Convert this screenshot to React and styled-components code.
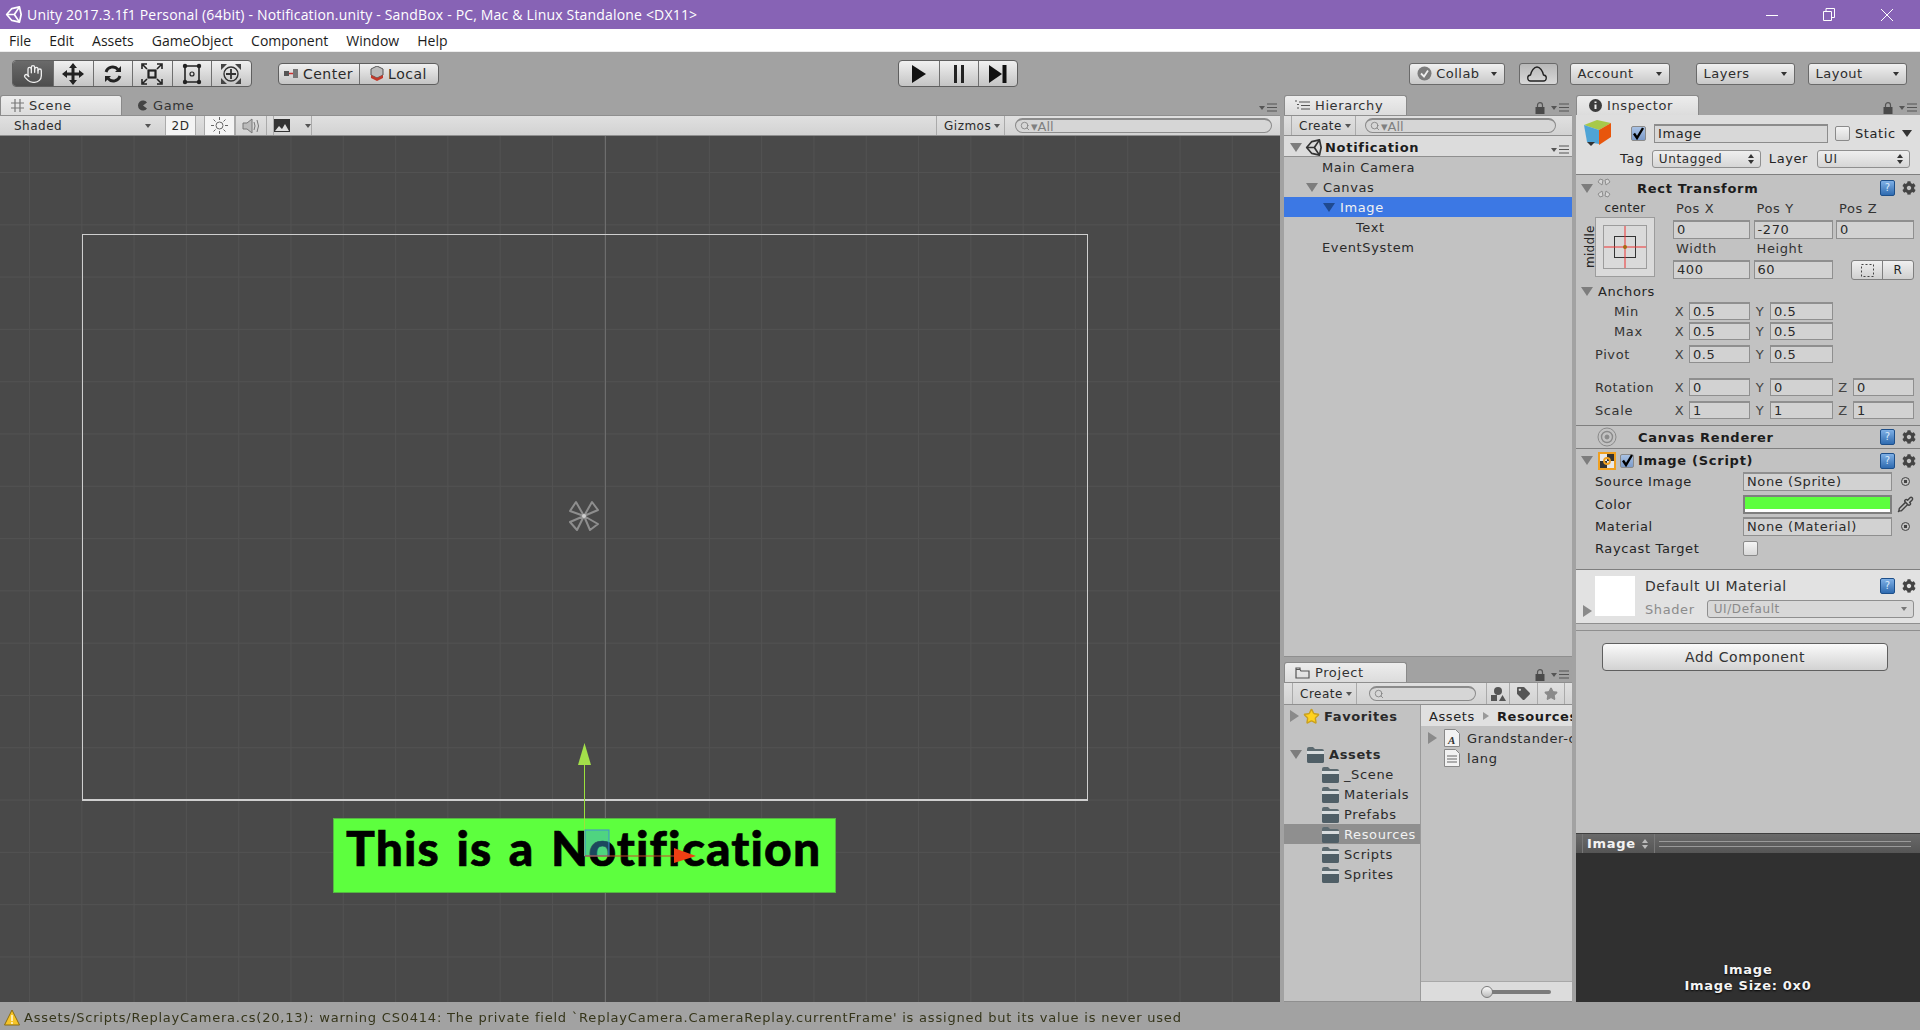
import React from 'react';
import styled, { createGlobalStyle } from 'styled-components';
import { Hand, Pipette, Star, Search } from 'lucide-react';
import { FaCog, FaTag } from 'react-icons/fa';

const GlobalStyle = createGlobalStyle`
  html, body { margin: 0; padding: 0; background: #a2a2a2; overflow: hidden; }
  * { box-sizing: border-box; }
  svg { flex: none; }
`;

const Window = styled.div`
  width: 1920px;
  height: 1030px;
  display: flex;
  flex-direction: column;
  font-family: 'DejaVu Sans', sans-serif;
  font-size: 13px;
  color: #242424;
  filter: blur(0.35px);
`;

const TitleBar = styled.div`
  height: 29px;
  background: #8763b5;
  color: #fff;
  display: flex;
  align-items: center;
  padding-left: 5px;
  font-family: 'Open Sans', sans-serif;
  font-size: 14px;
`;

const TitleText = styled.span`
  margin-left: 5px;
  letter-spacing: 0.18px;
`;

const WindowControls = styled.div`
  margin-left: auto;
  display: flex;
  align-items: center;
  padding-right: 26px;
  gap: 45px;
`;

const MenuBar = styled.div`
  height: 23px;
  background: #fff;
  border-bottom: 1px solid #ececec;
  display: flex;
  align-items: center;
  padding-left: 9px;
  gap: 18px;
  font-family: 'Open Sans', sans-serif;
  font-size: 14px;
  color: #1c1c1c;
`;

const MainToolbar = styled.div`
  height: 43px;
  background: #a2a2a2;
  display: flex;
  align-items: center;
  padding-left: 12px;
`;

const ButtonGroup = styled.div`
  display: flex;
  height: ${p => p.$h}px;
  margin-left: ${p => p.$ml || 0}px;
  border: 1px solid #5f5f5f;
  border-radius: 4px;
  overflow: hidden;
  background: linear-gradient(#f0f0f0, #c4c4c4);
`;

const ToolButton = styled.div`
  width: ${p => p.$w}px;
  display: flex;
  align-items: center;
  justify-content: center;
  gap: 4px;
  color: #2a2a2a;
  font-size: 14px;
  letter-spacing: 0.5px;
  border-left: ${p => (p.$first ? 'none' : '1px solid #6f6f6f')};
  background: ${p => (p.$active ? 'linear-gradient(#6a6a6a, #4d4d4d)' : 'transparent')};
`;

const PillButton = styled.div`
  width: ${p => p.$w}px;
  height: 22px;
  margin-left: ${p => p.$ml || 0}px;
  border: 1px solid #6a6a6a;
  border-radius: 3px;
  background: ${p => (p.$sunk ? 'linear-gradient(#b8b8b8, #d8d8d8)' : 'linear-gradient(#f0f0f0, #c8c8c8)')};
  display: flex;
  align-items: center;
  padding: 0 7px;
  font-size: 13px;
  letter-spacing: 0.5px;
  color: #2d2d2d;
`;

const Caret = styled.span`
  width: 0;
  height: 0;
  margin-left: auto;
  border-left: 3px solid transparent;
  border-right: 3px solid transparent;
  border-top: 4px solid ${p => p.$color || '#333'};
`;

const Workspace = styled.div`
  height: 907px;
  display: flex;
  background: #a2a2a2;
`;

const SceneColumn = styled.div`
  width: 1280px;
  display: flex;
  flex-direction: column;
`;

const MiddleColumn = styled.div`
  width: 288px;
  margin-left: 4px;
  display: flex;
  flex-direction: column;
`;

const InspectorColumn = styled.div`
  width: 344px;
  margin-left: 4px;
  display: flex;
  flex-direction: column;
`;

const TabStrip = styled.div`
  height: 20px;
  flex: none;
  display: flex;
  align-items: flex-end;
  margin-top: ${p => p.$mt || 0}px;
`;

const Tab = styled.div`
  width: ${p => p.$w}px;
  height: 20px;
  padding-left: ${p => p.$pl}px;
  display: flex;
  align-items: center;
  gap: 5px;
  border-radius: 3px 3px 0 0;
  letter-spacing: 0.6px;
  color: #333;
  background: ${p => (p.$active ? 'linear-gradient(#ededed, #dcdcdc)' : 'transparent')};
  border: ${p => (p.$active ? '1px solid #8a8a8a' : 'none')};
  border-bottom: none;
`;

const StripTools = styled.div`
  margin-left: auto;
  height: 20px;
  display: flex;
  align-items: center;
  gap: 6px;
  padding: 5px 3px 0 0;
`;

const Toolbar = styled.div`
  height: ${p => p.$h || 21}px;
  flex: none;
  display: flex;
  align-items: center;
  background: linear-gradient(#e0e0e0, #d2d2d2);
  border-top: 1px solid #8f8f8f;
  border-bottom: 1px solid #8f8f8f;
  font-size: 12px;
  letter-spacing: 0.5px;
  padding-left: ${p => p.$pl || 0}px;
`;

const ToolbarCell = styled.div`
  width: ${p => p.$w}px;
  height: 100%;
  margin-left: ${p => p.$ml || 0}px;
  display: flex;
  align-items: center;
  justify-content: ${p => (p.$center ? 'center' : 'flex-start')};
  padding: ${p => (p.$center ? '0' : '0 4px 0 7px')};
  background: ${p => (p.$on ? '#f4f4f4' : 'transparent')};
  border-left: ${p => (p.$edge ? '1px solid #aaa' : 'none')};
  border-right: ${p => (p.$edge ? '1px solid #aaa' : 'none')};
  color: #2a2a2a;
`;

const SearchField = styled.div`
  width: ${p => p.$w}px;
  height: 15px;
  margin-left: ${p => p.$ml}px;
  border: 1px solid #8b8b8b;
  border-top-width: 2px;
  border-radius: 8px;
  background: #d6d6d6;
  display: flex;
  align-items: center;
  padding-left: 4px;
  gap: 1px;
  color: #808080;
  font-size: 13px;
  letter-spacing: 0;
`;

const SceneView = styled.div`
  position: relative;
  flex: 1;
  overflow: hidden;
  background-color: #494949;
  background-image:
    linear-gradient(to right, #525252 1px, transparent 1px),
    linear-gradient(to bottom, #525252 1px, transparent 1px);
  background-size: 52.3px 52.3px;
  background-position: 29px 36px;
`;

const AxisLine = styled.div`
  position: absolute;
  left: 605px;
  top: 0;
  bottom: 0;
  width: 1px;
  background: #6d6d6d;
`;

const CanvasFrame = styled.div`
  position: absolute;
  left: 82px;
  top: 98px;
  width: 1006px;
  height: 567px;
  border: 2px solid #cfcfcf;
  border-width: 1px 1px 2px 1px;
`;

const NotificationImage = styled.div`
  position: absolute;
  left: 333px;
  top: 682px;
  width: 503px;
  height: 75px;
  background: #5dff3e;
  border: 1px solid #55b742;
  color: #000;
  font-family: Lato, sans-serif;
  font-weight: 900;
  font-size: 48px;
  line-height: 58px;
  padding-left: 12px;
  letter-spacing: 1.1px;
  word-spacing: 4px;
  white-space: nowrap;
  -webkit-text-stroke: 0.6px #000;
`;

const GizmoOverlay = styled.svg`
  position: absolute;
  left: 0;
  top: 0;
  width: 1280px;
  height: 866px;
`;

const StatusBar = styled.div`
  height: 28px;
  background: #a2a2a2;
  display: flex;
  align-items: center;
  padding: 2px 0 0 4px;
  gap: 4px;
  font-size: 13px;
  letter-spacing: 0.79px;
  color: #35351a;
  white-space: nowrap;
`;

const Panel = styled.div`
  flex: ${p => (p.$grow ? 1 : 'none')};
  height: ${p => (p.$h ? `${p.$h}px` : 'auto')};
  background: #c2c2c2;
  border-bottom: 1px solid #8f8f8f;
  display: flex;
  flex-direction: column;
  overflow: hidden;
`;

const SceneTitleRow = styled.div`
  height: 21px;
  padding: 2px 0 0 6px;
  flex: none;
  display: flex;
  align-items: center;
  background: #dcdcdc;
  border-bottom: 1px solid #8f8f8f;
  font-weight: 700;
  letter-spacing: 0.7px;
  color: #1c1c1c;
  gap: 3px;
`;

const TreeRow = styled.div`
  height: 20px;
  display: flex;
  align-items: center;
  padding-left: ${p => p.$indent}px;
  gap: ${p => p.$gap ?? 5}px;
  letter-spacing: 0.62px;
  white-space: nowrap;
  font-weight: ${p => (p.$bold ? 700 : 400)};
  color: ${p => (p.$selected || p.$muted ? '#f2f2f2' : '#2a2a2a')};
  background: ${p => (p.$selected ? '#3c78e4' : p.$muted ? '#8f8f8f' : 'transparent')};
  margin-top: ${p => p.$mt || 0}px;
`;

const Arrow = styled.span`
  width: 0;
  height: 0;
  flex: none;
  border-style: solid;
  border-color: transparent;
  ${p => (p.$right
    ? `border-width: 6px 0 6px 9px; border-left-color: ${p.$color || '#8a8a8a'};`
    : `border-width: 9px 6px 0 6px; border-top-color: ${p.$color || '#7d7d7d'};`)}
`;

const SmallRightArrow = styled(Arrow)`
  border-width: 4px 0 4px 6px;
`;

const SmallDownArrow = styled(Arrow)`
  margin-left: 6px;
  border-width: 7px 5px 0 5px;
`;

const ProjectBody = styled.div`
  flex: 1;
  display: flex;
  min-height: 0;
`;

const ProjectTree = styled.div`
  width: 137px;
  flex: none;
  border-right: 1px solid #9a9a9a;
  padding-top: 1px;
`;

const ProjectFiles = styled.div`
  flex: 1;
  min-width: 0;
  display: flex;
  flex-direction: column;
`;

const Breadcrumb = styled.div`
  height: 21px;
  flex: none;
  background: #e0e0e0;
  display: flex;
  align-items: center;
  padding: 1px 0 0 8px;
  gap: 8px;
  letter-spacing: 0.6px;
  white-space: nowrap;
  overflow: hidden;
`;

const BoldCrumb = styled.span`
  font-weight: 700;
  color: #1c1c1c;
`;

const FileList = styled.div`
  flex: 1;
  padding-top: 2px;
  overflow: hidden;
`;

const SliderBar = styled.div`
  height: 20px;
  flex: none;
  background: #dcdcdc;
  border-top: 1px solid #a8a8a8;
  position: relative;
`;

const SliderTrack = styled.div`
  position: absolute;
  left: 66px;
  top: 8px;
  width: 64px;
  height: 4px;
  border-radius: 2px;
  background: #7b7b7b;
`;

const SliderKnob = styled.div`
  position: absolute;
  left: 60px;
  top: 4px;
  width: 12px;
  height: 12px;
  border-radius: 50%;
  border: 1px solid #7b7b7b;
  background: linear-gradient(#fafafa, #bcbcbc);
`;

const ObjectHeader = styled.div`
  height: 60px;
  flex: none;
  background: #dedede;
  border-bottom: 1px solid #7f7f7f;
  padding: 9px 0 0 8px;
  display: flex;
  flex-direction: column;
  gap: 6px;
`;

const HeaderRow = styled.div`
  display: flex;
  align-items: center;
  height: 19px;
  padding-left: ${p => p.$pl || 0}px;
  letter-spacing: 0.6px;
`;

const HeaderLabel = styled.span`
  margin-left: ${p => p.$ml}px;
`;

const CheckBox = styled.div`
  width: ${p => p.$size || 15}px;
  height: ${p => p.$size || 15}px;
  flex: none;
  margin-left: ${p => p.$ml || 0}px;
  border: 1px solid #8a8a8a;
  border-radius: 2px;
  background: ${p => (p.$checked ? 'linear-gradient(#a9c2e4, #7c9bca)' : 'linear-gradient(#f4f4f4, #d8d8d8)')};
  display: flex;
  align-items: center;
  justify-content: center;
`;

const NameField = styled.div`
  width: 174px;
  height: 19px;
  margin-left: 8px;
  background: #d8d8d8;
  border: 1px solid #8c8c8c;
  border-top-width: 2px;
  padding-left: 3px;
  line-height: 15px;
  letter-spacing: 0.6px;
`;

const SelectBox = styled.div`
  width: ${p => p.$w}px;
  height: ${p => p.$h || 18}px;
  margin-left: ${p => p.$ml || 0}px;
  border: 1px solid #8f8f8f;
  border-radius: 3px;
  background: ${p => (p.$faint ? '#d8d8d8' : 'linear-gradient(#efefef, #d6d6d6)')};
  color: ${p => (p.$faint ? '#8a8a8a' : '#2d2d2d')};
  display: flex;
  align-items: center;
  justify-content: space-between;
  padding: 0 6px;
  font-size: 12px;
  letter-spacing: 0.6px;
`;

const ComponentHead = styled.div`
  height: ${p => p.$h}px;
  display: flex;
  align-items: center;
  padding-left: ${p => p.$pl ?? 5}px;
  font-weight: 700;
  letter-spacing: 0.72px;
  color: #1c1c1c;
  white-space: nowrap;
`;

const HeadTitle = styled.span`
  margin-left: ${p => p.$ml}px;
  display: inline-flex;
`;

const HeadTools = styled.div`
  margin-left: auto;
  display: flex;
  align-items: center;
  gap: 7px;
  padding-right: 4px;
`;

const HelpBook = styled.div`
  width: 15px;
  height: 16px;
  border-radius: 2px;
  border: 1px solid #1d4f8a;
  background: linear-gradient(#7fb0e6, #2f6bb0);
  color: #dbe9f8;
  font-size: 10px;
  font-weight: 400;
  line-height: 14px;
  text-align: center;
  letter-spacing: 0;
`;

const RectSection = styled.section`
  height: 251px;
  flex: none;
  border-bottom: 1px solid #7f7f7f;
`;

const RectBody = styled.div`
  display: flex;
  padding-left: 7px;
  margin-top: -1px;
`;

const MiddleLabel = styled.div`
  writing-mode: vertical-rl;
  transform: rotate(180deg);
  font-size: 12px;
  height: 60px;
  width: 12px;
  margin-top: 17px;
  text-align: center;
  letter-spacing: 0.3px;
`;

const PresetColumn = styled.div`
  width: 78px;
  flex: none;
`;

const PresetCaption = styled.div`
  width: 60px;
  height: 17px;
  text-align: center;
  font-size: 12px;
  letter-spacing: 0.4px;
  line-height: 17px;
`;

const PresetBox = styled.div`
  width: 60px;
  height: 60px;
  background: #dadada;
  border: 1px solid #9c9c9c;
  display: flex;
  align-items: center;
  justify-content: center;
`;

const FieldGrid = styled.div`
  width: 241px;
  display: grid;
  grid-template-columns: 77px 79px 78px;
  grid-auto-rows: 19px;
  column-gap: 3.5px;
  row-gap: 1px;
  letter-spacing: 0.6px;
`;

const FieldLabel = styled.div`
  padding: 1px 0 0 3px;
  line-height: 16px;
  color: #333;
`;

const ValueField = styled.div`
  background: #d2d2d2;
  border: 1px solid #8f8f8f;
  border-top-width: 2px;
  padding-left: 3px;
  line-height: 15px;
  font-size: 13px;
  letter-spacing: 0.6px;
  color: #2a2a2a;
  white-space: nowrap;
  overflow: hidden;
  ${p => p.$h && `height: ${p.$h}px;`}
`;

const BlueprintGroup = styled.div`
  display: flex;
  width: 63px;
  height: 20px;
  justify-self: end;
  border: 1px solid #7f7f7f;
  border-radius: 3px;
  background: linear-gradient(#f0f0f0, #cfcfcf);
  overflow: hidden;
`;

const BlueprintCell = styled.div`
  flex: 1;
  display: flex;
  align-items: center;
  justify-content: center;
  font-size: 12px;
  border-left: ${p => (p.$sep ? '1px solid #7f7f7f' : 'none')};
`;

const AnchorsHead = styled.div`
  height: 19px;
  margin-top: 3px;
  display: flex;
  align-items: center;
  padding-left: 5px;
  gap: 5px;
  letter-spacing: 0.6px;
`;

const AxisGrid = styled.div`
  height: 20px;
  margin-top: ${p => p.$mt || 0}px;
  display: grid;
  grid-template-columns: 94px 19px 61px 20px 63px 20px 61px;
  align-items: center;
  letter-spacing: 0.6px;
`;

const AxisLabel = styled.span`
  padding-left: ${p => p.$pl || 0}px;
  color: #333;
`;

const AxisLetter = styled.span`
  color: #444;
  text-align: center;
`;

const ImageScriptSection = styled.section`
  height: 121px;
  flex: none;
  border-top: 1px solid #7f7f7f;
`;

const PropertyRow = styled.div`
  height: 18.5px;
  margin-bottom: 4px;
  display: grid;
  grid-template-columns: 148px 149px 22px;
  padding-left: 19px;
  align-items: center;
  letter-spacing: 0.62px;
`;

const ColorSwatch = styled.div`
  height: 19px;
  border: 2px solid #7f7f7f;
  background: linear-gradient(#5dff3e 0 12px, #fff 12px);
`;

const PickerDot = styled.span`
  width: 9px;
  height: 9px;
  margin-left: 9px;
  border-radius: 50%;
  border: 1px solid #444;
  background: radial-gradient(#444 0 1.5px, transparent 2px);
`;

const PipetteSlot = styled.span`
  display: flex;
  margin-left: 5px;
`;

const MaterialSection = styled.section`
  height: 55px;
  flex: none;
  background: #e2e2e2;
  border-top: 1px solid #7f7f7f;
  border-bottom: 1px solid #8f8f8f;
  display: flex;
  position: relative;
  padding: 6px 0 0 19px;
`;

const MaterialThumb = styled.div`
  width: 40px;
  height: 40px;
  background: #fff;
`;

const MaterialInfo = styled.div`
  margin-left: 10px;
  flex: 1;
  display: flex;
  flex-direction: column;
`;

const MaterialName = styled.div`
  display: flex;
  height: 20px;
  align-items: center;
  font-size: 14px;
  letter-spacing: 0.55px;
  color: #333;
`;

const ShaderRow = styled.div`
  display: flex;
  align-items: center;
  margin-top: 4px;
  color: #8c8c8c;
  letter-spacing: 0.6px;
`;

const MaterialArrow = styled.div`
  position: absolute;
  left: 7px;
  top: 35px;
  display: flex;
`;

const AddRow = styled.div`
  margin-top: 6px;
  border-top: 1px solid #8f8f8f;
  padding: 12px 0 0 26px;
`;

const AddButton = styled.div`
  width: 286px;
  height: 28px;
  border: 1px solid #5f5f5f;
  border-radius: 4px;
  background: linear-gradient(#fafafa, #d2d2d2);
  text-align: center;
  line-height: 26px;
  font-size: 14px;
  letter-spacing: 0.55px;
  color: #333;
`;

const InspectorFill = styled.div`
  flex: 1;
  background: #c2c2c2;
  display: flex;
  flex-direction: column;
  overflow: hidden;
`;

const PreviewHead = styled.div`
  height: 20px;
  flex: none;
  background: linear-gradient(#6a6a6a, #555);
  border-top: 1px solid #3f3f3f;
  display: flex;
  align-items: center;
  padding-left: 6px;
  color: #f2f2f2;
  font-weight: 700;
  letter-spacing: 0.7px;
`;

const PreviewName = styled.div`
  width: 73px;
  height: 100%;
  display: flex;
  align-items: center;
  justify-content: space-between;
  padding: 0 6px 0 4px;
  border-left: 1px solid #777;
  border-right: 1px solid #777;
`;

const PreviewStripes = styled.div`
  flex: 1;
  height: 6px;
  margin: 0 9px 0 4px;
  border-top: 1px solid #9a9a9a;
  border-bottom: 1px solid #9a9a9a;
`;

const PreviewBody = styled.div`
  height: 149px;
  flex: none;
  background: #303030;
  display: flex;
  flex-direction: column;
  justify-content: flex-end;
  align-items: center;
  padding-bottom: 8px;
  color: #f4f4f4;
  font-weight: 700;
  font-size: 13px;
  line-height: 16px;
  letter-spacing: 0.72px;
  text-shadow: 0 1px 2px #000;
`;

const Lock = () => (
  <svg width="10" height="12" viewBox="0 0 10 12">
    <path d="M2.500 5V3.200a2.500 2.500 0 0 1 5 0V5" fill="none" stroke="#555" strokeWidth="1.200" />
    <rect x="0.500" y="5" width="9" height="7" fill="#4a4a4a" />
  </svg>
);

const PaneMenu = () => (
  <svg width="18" height="9" viewBox="0 0 18 9">
    <path d="M0 3h6L3 7z" fill="#555" />
    <path d="M8 1h10M8 4.500h10M8 8h10" stroke="#555" strokeWidth="1.200" />
  </svg>
);

const UnityLogo = ({ size, color }) => (
  <svg width={size} height={size} viewBox="0 0 20 20" fill="none" stroke={color} strokeWidth="2" strokeLinejoin="round">
    <path d="M2 10 L8 3 L17 1 L19 10 L17 19 L8 17 Z" />
    <path d="M2 10 H11 L17 1 M11 10 L17 19" />
  </svg>
);

const UpDown = ({ color = '#333' }) => (
  <svg width="6" height="10" viewBox="0 0 6 10" fill={color}>
    <path d="M3 0l3 4H0zM3 10L0 6h6z" />
  </svg>
);

const Check = () => (
  <svg width="13" height="13" viewBox="0 0 13 13" fill="none" stroke="#000" strokeWidth="2.400">
    <path d="M2 6.500l3 4.500L11 1" />
  </svg>
);

const MoveIcon = () => (
  <svg width="22" height="22" viewBox="0 0 22 22" fill="#222">
    <path d="M11 0l4 5h-2.500v4.500H17V7l5 4-5 4v-2.500h-4.500V17H15l-4 5-4-5h2.500v-4.500H5V15l-5-4 5-4v2.500h4.500V5H7z" />
  </svg>
);

const RotateIcon = () => (
  <svg width="20" height="20" viewBox="0 0 20 20" fill="none" stroke="#222" strokeWidth="2.800">
    <path d="M3 8a7 7 0 0 1 12-2.500M17 12a7 7 0 0 1-12 2.500" />
    <path d="M18 2v6h-6zM2 18v-6h6z" fill="#222" stroke="none" />
  </svg>
);

const ScaleIcon = () => (
  <svg width="22" height="22" viewBox="0 0 22 22" fill="none" stroke="#222" strokeWidth="1.600">
    <rect x="7.500" y="7.500" width="7" height="7" strokeWidth="2.200" />
    <path d="M1 6V1h5M16 1h5v5M21 16v5h-5M6 21H1v-5M2 2l4 4M20 2l-4 4M20 20l-4-4M2 20l4-4" />
  </svg>
);

const RectIcon = () => (
  <svg width="22" height="22" viewBox="0 0 22 22" fill="none" stroke="#222" strokeWidth="1.600">
    <path d="M4 3h14M4 19h14M4 3v16M18 3v16" />
    <circle cx="11" cy="11" r="2" strokeWidth="1.200" />
    <g fill="#222" stroke="none">
      <circle cx="4" cy="3" r="2.200" /><circle cx="18" cy="3" r="2.200" />
      <circle cx="4" cy="19" r="2.200" /><circle cx="18" cy="19" r="2.200" />
    </g>
  </svg>
);

const TransformIcon = () => (
  <svg width="24" height="24" viewBox="0 0 24 24" fill="none" stroke="#333" strokeWidth="1.400">
    <circle cx="12" cy="12" r="7" />
    <path d="M12 7v10M7 12h10" strokeWidth="1.800" />
    <path d="M2 2h6L2 8zM22 2h-6l6 6zM2 22h6l-6-6zM22 22h-6l6-6z" fill="#444" stroke="none" />
  </svg>
);

const PlayIcon = () => (
  <svg width="14" height="18" viewBox="0 0 14 18"><path d="M0 0l14 9-14 9z" fill="#111" /></svg>
);

const PauseIcon = () => (
  <svg width="12" height="18" viewBox="0 0 12 18" fill="#222">
    <rect x="1" width="3" height="18" /><rect x="8" width="3" height="18" />
  </svg>
);

const StepIcon = () => (
  <svg width="18" height="18" viewBox="0 0 18 18" fill="#111">
    <path d="M0 0l13 9-13 9z" /><rect x="13.500" width="4" height="18" />
  </svg>
);

const PivotIcon = () => (
  <svg width="15" height="11" viewBox="0 0 15 11">
    <rect x="0" y="3" width="5" height="5" fill="#555" />
    <rect x="9" y="1" width="5" height="9" fill="#777" />
    <path d="M5 5.500h4" stroke="#c33" strokeWidth="1.500" />
  </svg>
);

const LocalIcon = () => (
  <svg width="14" height="15" viewBox="0 0 14 15">
    <path d="M7 0l6 3v6l-6 3-6-3V3z" fill="#bbb" stroke="#555" />
    <path d="M1 9l6 3 6-3v3l-6 3-6-3z" fill="#c0392b" />
  </svg>
);

const CollabCheck = () => (
  <svg width="15" height="15" viewBox="0 0 15 15">
    <circle cx="7.500" cy="7.500" r="7" fill="#7c7c7c" />
    <path d="M4 7.500l3 3 4-6" fill="none" stroke="#eee" strokeWidth="1.800" />
  </svg>
);

const CloudIcon = () => (
  <svg width="20" height="18" viewBox="0 0 20 18" fill="none" stroke="#222" strokeWidth="1.300">
    <path d="M4 16a3 3 0 0 1-.5-6c.8-4 3.500-8 6.500-8s5.700 4 6.500 8a3 3 0 0 1-.5 6z" />
  </svg>
);

const GridGlyph = () => (
  <svg width="13" height="13" viewBox="0 0 13 13" stroke="#777" strokeWidth="1.200">
    <path d="M4 0v13M9 0v13M0 4h13M0 9h13" />
  </svg>
);

const GameGlyph = () => (
  <svg width="11" height="11" viewBox="0 0 11 11">
    <path d="M10 2.500A5 5 0 1 0 10 8.500L6 5.500z" fill="#444" />
  </svg>
);

const ListGlyph = () => (
  <svg width="15" height="11" viewBox="0 0 15 11" stroke="#555" strokeWidth="1.200">
    <path d="M4 2h11M6 5.500h9M6 9h9M0 1h2M2 4.500h2M2 8h2" />
  </svg>
);

const InfoGlyph = () => (
  <svg width="13" height="13" viewBox="0 0 13 13">
    <circle cx="6.500" cy="6.500" r="6.500" fill="#3c3c3c" />
    <path d="M6.500 5.500v4.500M6.500 2.500v1.500" stroke="#eee" strokeWidth="2" />
  </svg>
);

const FolderOutline = () => (
  <svg width="15" height="12" viewBox="0 0 15 12" fill="none" stroke="#555" strokeWidth="1.200">
    <path d="M1 2.500h4l1 1.500h8v7H1zM1 2.500V1h4v1.500" />
  </svg>
);

const FolderGlyph = () => (
  <svg width="19" height="17" viewBox="0 0 19 17">
    <path d="M1 3q0-2 2-2h4l2 2h7q2 0 2 2v10q0 2-2 2H3q-2 0-2-2z" fill="#5c6a70" />
    <path d="M1 5h17v3H1z" fill="#d8dcde" />
    <path d="M1 8h17v7q0 2-2 2H3q-2 0-2-2z" fill="#4f5e66" />
  </svg>
);

const ColorCube = () => (
  <svg width="28" height="27" viewBox="0 0 28 27">
    <path d="M0 5l13-5 14 3-12 7z" fill="#a8c94a" />
    <path d="M0 5l15 5v14l-12-2z" fill="#4fa4d6" />
    <path d="M15 10l12-7v14l-12 8z" fill="#e8560c" />
    <path d="M3 22h8l-4 4z" fill="#333" />
  </svg>
);

const RectGlyph = () => (
  <svg width="22" height="20" viewBox="0 0 22 20" fill="none" stroke="#8d8d8d" strokeWidth="1">
    <path d="M7 1l3 1-1 5-4-3zM15 1l-3 1 1 5 4-3zM7 19l3-1-1-5-4 3zM15 19l-3-1 1-5 4 3z" fill="#d6d6d6" />
  </svg>
);

const RendererGlyph = () => (
  <svg width="20" height="20" viewBox="0 0 20 20" fill="none" stroke="#8a8a8a">
    <circle cx="10" cy="10" r="9" />
    <circle cx="10" cy="10" r="5.500" strokeWidth="1.400" />
    <circle cx="10" cy="10" r="2" fill="#8a8a8a" />
  </svg>
);

const ScriptGlyph = () => (
  <svg width="18" height="18" viewBox="0 0 18 18">
    <rect x="1" y="1" width="16" height="16" fill="#e9e9e9" stroke="#f0a020" strokeWidth="2" />
    <rect x="2" y="9" width="7" height="7" fill="#333" />
    <rect x="9" y="2" width="7" height="7" fill="#333" />
    <circle cx="9" cy="9" r="3" fill="none" stroke="#f0a020" strokeWidth="1.800" />
  </svg>
);

const PresetGlyph = () => (
  <svg width="44" height="44" viewBox="0 0 44 44" fill="none">
    <rect x="0.500" y="0.500" width="43" height="43" stroke="#9c9c9c" />
    <rect x="11.500" y="11.500" width="21" height="21" stroke="#333" />
    <path d="M22 1v42M1 22h42" stroke="#e33" />
    <circle cx="22" cy="22" r="2" fill="#a86a10" />
  </svg>
);

const DottedRect = () => (
  <svg width="13" height="13" viewBox="0 0 13 13" fill="none" stroke="#444" strokeDasharray="2 2">
    <rect x="0.500" y="0.500" width="12" height="12" />
  </svg>
);

const FontFile = () => (
  <svg width="16" height="18" viewBox="0 0 16 18">
    <path d="M.5.500h11l4 4v13H.5z" fill="#f2f2f2" stroke="#888" />
    <text x="8" y="15" fontSize="11" fontFamily="Liberation Serif, serif" fontStyle="italic" fontWeight="700" textAnchor="middle" fill="#333">A</text>
  </svg>
);

const TextFile = () => (
  <svg width="16" height="18" viewBox="0 0 16 18">
    <path d="M.5.500h11l4 4v13H.5z" fill="#f2f2f2" stroke="#888" />
    <path d="M3 7h10M3 10h10M3 13h10" stroke="#666" />
  </svg>
);

const WarningIcon = () => (
  <svg width="16" height="17" viewBox="0 0 16 17">
    <path d="M8 1l7.500 15H.5z" fill="#f6c428" stroke="#8a6d10" />
    <path d="M8 6v6M8 13v2" stroke="#fff7d0" strokeWidth="1.600" />
  </svg>
);

const ComponentTools = () => (
  <HeadTools>
    <HelpBook>?</HelpBook>
    <FaCog size={14} color="#444" />
  </HeadTools>
);

const Gizmos = () => (
  <GizmoOverlay viewBox="0 0 1280 866">
    <g fill="none" stroke="#8e8e8e" strokeWidth="2" strokeLinejoin="round" transform="translate(584 380)">
      <path d="M0 0L-14 -5L-8 -14Z M0 0L8 -14L14 -6Z M0 0L-14 6L-7 14Z M0 0L6 14L14 8Z" />
    </g>
    <circle cx="584" cy="380" r="2" fill="#cfcfcf" />
    <path d="M584.500 627V720" stroke="#9be23c" strokeWidth="1" />
    <path d="M584.500 607L591 629H578Z" fill="#a3e04a" />
    <rect x="585" y="694" width="24" height="26" fill="#3f9fd0" fillOpacity="0.45" stroke="#3f8fd0" strokeWidth="1" />
    <path d="M585 720H675" stroke="#c9452a" strokeWidth="1.200" />
    <path d="M674 712L696 720L674 727Z" fill="#ef3f14" />
  </GizmoOverlay>
);

const App = () => (
  <Window>
    <GlobalStyle />
    <TitleBar>
      <UnityLogo size={17} color="#fff" />
      <TitleText>Unity 2017.3.1f1 Personal (64bit) - Notification.unity - SandBox - PC, Mac &amp; Linux Standalone &lt;DX11&gt;</TitleText>
      <WindowControls>
        <svg width="12" height="12" viewBox="0 0 12 12" stroke="#fff"><path d="M0 6.500h12" /></svg>
        <svg width="12" height="13" viewBox="0 0 12 13" fill="none" stroke="#fff"><path d="M.5 3.500h8v9h-8zM3 3.500V.5h8.500v9H8.500" /></svg>
        <svg width="14" height="14" viewBox="0 0 14 14" stroke="#fff"><path d="M1 1l12 12M13 1L1 13" /></svg>
      </WindowControls>
    </TitleBar>

    <MenuBar>
      {['File', 'Edit', 'Assets', 'GameObject', 'Component', 'Window', 'Help'].map(m => (
        <span key={m}>{m}</span>
      ))}
    </MenuBar>

    <MainToolbar>
      <ButtonGroup $h={27}>
        <ToolButton $w={40} $first $active><Hand size={20} color="#eee" strokeWidth={1.6} /></ToolButton>
        <ToolButton $w={39.500}><MoveIcon /></ToolButton>
        <ToolButton $w={39.500}><RotateIcon /></ToolButton>
        <ToolButton $w={39.500}><ScaleIcon /></ToolButton>
        <ToolButton $w={39.500}><RectIcon /></ToolButton>
        <ToolButton $w={39.500}><TransformIcon /></ToolButton>
      </ButtonGroup>
      <ButtonGroup $h={22} $ml={26}>
        <ToolButton $w={80} $first><PivotIcon />Center</ToolButton>
        <ToolButton $w={79}><LocalIcon />Local</ToolButton>
      </ButtonGroup>
      <ButtonGroup $h={27} $ml={459}>
        <ToolButton $w={40} $first><PlayIcon /></ToolButton>
        <ToolButton $w={39}><PauseIcon /></ToolButton>
        <ToolButton $w={39}><StepIcon /></ToolButton>
      </ButtonGroup>
      <PillButton $w={96} $ml={391}>
        <CollabCheck />&nbsp;Collab<Caret />
      </PillButton>
      <PillButton $w={39} $ml={14} $sunk><CloudIcon /></PillButton>
      <PillButton $w={100} $ml={12}>Account<Caret /></PillButton>
      <PillButton $w={99} $ml={26}>Layers<Caret /></PillButton>
      <PillButton $w={99} $ml={13}>Layout<Caret /></PillButton>
    </MainToolbar>

    <Workspace>
      <SceneColumn>
        <TabStrip>
          <Tab $w={122} $pl={10} $active><GridGlyph />Scene</Tab>
          <Tab $w={120} $pl={15}><GameGlyph />Game</Tab>
          <StripTools><PaneMenu /></StripTools>
        </TabStrip>
        <Toolbar $pl={7}>
          <ToolbarCell $w={148}>Shaded<Caret $color="#555" /></ToolbarCell>
          <ToolbarCell $w={31} $ml={10} $center $on $edge>2D</ToolbarCell>
          <ToolbarCell $w={31} $ml={8} $center $on $edge>
            <svg width="17" height="17" viewBox="0 0 17 17" fill="none" stroke="#666">
              <circle cx="8.500" cy="8.500" r="3.500" />
              <path d="M8.500 0v3M8.500 14v3M0 8.500h3M14 8.500h3M2.500 2.500l2 2M12.500 12.500l2 2M14.500 2.500l-2 2M4.500 12.500l-2 2" />
            </svg>
          </ToolbarCell>
          <ToolbarCell $w={32} $center $edge>
            <svg width="18" height="16" viewBox="0 0 18 16" fill="none" stroke="#777">
              <path d="M1 5h4l5-4v14l-5-4H1z" fill="#bbb" />
              <path d="M12 4q2 4 0 8M15 2q3 6 0 12" />
            </svg>
          </ToolbarCell>
          <ToolbarCell $w={39} $ml={6} $center $edge>
            <svg width="16" height="13" viewBox="0 0 16 13">
              <rect width="16" height="13" fill="#333" />
              <path d="M1 12l4-5 3 3 3-5 4 7z" fill="#ddd" />
            </svg>
            &nbsp;<Caret $color="#555" />
          </ToolbarCell>
          <ToolbarCell $w={69} $ml={624} $edge>Gizmos<Caret $color="#555" /></ToolbarCell>
          <SearchField $w={257} $ml={10}>
            <Search size={10} />▾All
          </SearchField>
        </Toolbar>
        <SceneView>
          <AxisLine />
          <CanvasFrame />
          <NotificationImage>This is a Notification</NotificationImage>
          <Gizmos />
        </SceneView>
      </SceneColumn>

      <MiddleColumn>
        <TabStrip>
          <Tab $w={123} $pl={10} $active><ListGlyph />Hierarchy</Tab>
          <StripTools><Lock /><PaneMenu /></StripTools>
        </TabStrip>
        <Panel $h={542}>
          <Toolbar $pl={7}>
            <ToolbarCell $w={65} $edge>Create<Caret $color="#555" /></ToolbarCell>
            <SearchField $w={191} $ml={9}><Search size={10} />▾All</SearchField>
          </Toolbar>
          <SceneTitleRow>
            <Arrow />
            <UnityLogo size={17} color="#333" />
            Notification
            <StripTools><PaneMenu /></StripTools>
          </SceneTitleRow>
          <TreeRow $indent={38}>Main Camera</TreeRow>
          <TreeRow $indent={22} $gap={5}><Arrow />Canvas</TreeRow>
          <TreeRow $indent={39} $gap={5} $selected><Arrow $color="#1f4a90" />Image</TreeRow>
          <TreeRow $indent={72}>Text</TreeRow>
          <TreeRow $indent={38}>EventSystem</TreeRow>
        </Panel>
        <TabStrip $mt={5}>
          <Tab $w={123} $pl={10} $active><FolderOutline />Project</Tab>
          <StripTools><Lock /><PaneMenu /></StripTools>
        </TabStrip>
        <Panel $grow>
          <Toolbar $pl={8} $h={23}>
            <ToolbarCell $w={65} $edge>Create<Caret $color="#555" /></ToolbarCell>
            <SearchField $w={107} $ml={12}><Search size={10} /></SearchField>
            <ToolbarCell $w={24} $ml={10} $center $edge>
              <svg width="15" height="14" viewBox="0 0 15 14" fill="#555"><circle cx="7" cy="4" r="4" /><rect y="8" width="6" height="6" /><path d="M8 14l3.500-6 3.500 6z" /></svg>
            </ToolbarCell>
            <ToolbarCell $w={27} $center><FaTag size={13} color="#555" /></ToolbarCell>
            <ToolbarCell $w={28} $center $edge><Star size={14} fill="#8a8a8a" color="#8a8a8a" /></ToolbarCell>
          </Toolbar>
          <ProjectBody>
            <ProjectTree>
              <TreeRow $indent={6} $gap={4} $bold><Arrow $right /><Star size={17} fill="#ffd21e" color="#c9a020" />Favorites</TreeRow>
              <TreeRow $indent={6} $gap={4} $bold $mt={18}><Arrow /><FolderGlyph />Assets</TreeRow>
              {['_Scene', 'Materials', 'Prefabs', 'Resources', 'Scripts', 'Sprites'].map(f => (
                <TreeRow key={f} $indent={37} $gap={4} $muted={f === 'Resources'}><FolderGlyph />{f}</TreeRow>
              ))}
            </ProjectTree>
            <ProjectFiles>
              <Breadcrumb>Assets<SmallRightArrow $right $color="#999" /><BoldCrumb>Resources</BoldCrumb></Breadcrumb>
              <FileList>
                <TreeRow $indent={7} $gap={7}><Arrow $right /><FontFile />Grandstander-clean</TreeRow>
                <TreeRow $indent={23} $gap={7}><TextFile />lang</TreeRow>
              </FileList>
              <SliderBar><SliderTrack /><SliderKnob /></SliderBar>
            </ProjectFiles>
          </ProjectBody>
        </Panel>
      </MiddleColumn>

      <InspectorColumn>
        <TabStrip>
          <Tab $w={123} $pl={12} $active><InfoGlyph />Inspector</Tab>
          <StripTools><Lock /><PaneMenu /></StripTools>
        </TabStrip>
        <InspectorFill>
          <ObjectHeader>
            <HeaderRow>
              <ColorCube />
              <CheckBox $checked $ml={19}><Check /></CheckBox>
              <NameField>Image</NameField>
              <CheckBox $ml={7} />
              <HeaderLabel $ml={5}>Static</HeaderLabel>
              <SmallDownArrow $color="#333" />
            </HeaderRow>
            <HeaderRow $pl={36}>
              Tag
              <SelectBox $w={109} $ml={8}>Untagged<UpDown /></SelectBox>
              <HeaderLabel $ml={8}>Layer</HeaderLabel>
              <SelectBox $w={93} $ml={9}>UI<UpDown /></SelectBox>
            </HeaderRow>
          </ObjectHeader>

          <RectSection>
            <ComponentHead $h={26}>
              <Arrow />
              <RectGlyph />
              <HeadTitle $ml={22}>Rect Transform</HeadTitle>
              <ComponentTools />
            </ComponentHead>
            <RectBody>
              <MiddleLabel>middle</MiddleLabel>
              <PresetColumn>
                <PresetCaption>center</PresetCaption>
                <PresetBox><PresetGlyph /></PresetBox>
              </PresetColumn>
              <FieldGrid>
                <FieldLabel>Pos X</FieldLabel><FieldLabel>Pos Y</FieldLabel><FieldLabel>Pos Z</FieldLabel>
                <ValueField>0</ValueField><ValueField>-270</ValueField><ValueField>0</ValueField>
                <FieldLabel>Width</FieldLabel><FieldLabel>Height</FieldLabel><span />
                <ValueField>400</ValueField><ValueField>60</ValueField>
                <BlueprintGroup>
                  <BlueprintCell><DottedRect /></BlueprintCell>
                  <BlueprintCell $sep>R</BlueprintCell>
                </BlueprintGroup>
              </FieldGrid>
            </RectBody>
            <AnchorsHead><Arrow />Anchors</AnchorsHead>
            <AxisGrid>
              <AxisLabel $pl={38}>Min</AxisLabel>
              <AxisLetter>X</AxisLetter><ValueField>0.5</ValueField>
              <AxisLetter>Y</AxisLetter><ValueField>0.5</ValueField>
            </AxisGrid>
            <AxisGrid>
              <AxisLabel $pl={38}>Max</AxisLabel>
              <AxisLetter>X</AxisLetter><ValueField>0.5</ValueField>
              <AxisLetter>Y</AxisLetter><ValueField>0.5</ValueField>
            </AxisGrid>
            <AxisGrid $mt={3}>
              <AxisLabel $pl={19}>Pivot</AxisLabel>
              <AxisLetter>X</AxisLetter><ValueField>0.5</ValueField>
              <AxisLetter>Y</AxisLetter><ValueField>0.5</ValueField>
            </AxisGrid>
            <AxisGrid $mt={13}>
              <AxisLabel $pl={19}>Rotation</AxisLabel>
              <AxisLetter>X</AxisLetter><ValueField>0</ValueField>
              <AxisLetter>Y</AxisLetter><ValueField>0</ValueField>
              <AxisLetter>Z</AxisLetter><ValueField>0</ValueField>
            </AxisGrid>
            <AxisGrid $mt={3}>
              <AxisLabel $pl={19}>Scale</AxisLabel>
              <AxisLetter>X</AxisLetter><ValueField>1</ValueField>
              <AxisLetter>Y</AxisLetter><ValueField>1</ValueField>
              <AxisLetter>Z</AxisLetter><ValueField>1</ValueField>
            </AxisGrid>
          </RectSection>

          <ComponentHead $h={22} $pl={21}>
            <RendererGlyph />
            <HeadTitle $ml={21}>Canvas Renderer</HeadTitle>
            <ComponentTools />
          </ComponentHead>

          <ImageScriptSection>
            <ComponentHead $h={23}>
              <Arrow />
              <HeadTitle $ml={5}><ScriptGlyph /></HeadTitle>
              <CheckBox $checked $size={14} $ml={4}><Check /></CheckBox>
              <HeadTitle $ml={4}>Image (Script)</HeadTitle>
              <ComponentTools />
            </ComponentHead>
            <PropertyRow>
              Source Image<ValueField $h={18.5}>None (Sprite)</ValueField><PickerDot />
            </PropertyRow>
            <PropertyRow>
              Color<ColorSwatch /><PipetteSlot><Pipette size={17} color="#444" /></PipetteSlot>
            </PropertyRow>
            <PropertyRow>
              Material<ValueField $h={18.5}>None (Material)</ValueField><PickerDot />
            </PropertyRow>
            <PropertyRow><span>Raycast Target</span><CheckBox /></PropertyRow>
          </ImageScriptSection>

          <MaterialSection>
            <MaterialThumb />
            <MaterialInfo>
              <MaterialName>Default UI Material<ComponentTools /></MaterialName>
              <ShaderRow>
                Shader
                <SelectBox $w={207} $ml={12} $faint>UI/Default<Caret $color="#777" /></SelectBox>
              </ShaderRow>
            </MaterialInfo>
            <MaterialArrow><Arrow $right /></MaterialArrow>
          </MaterialSection>

          <AddRow><AddButton>Add Component</AddButton></AddRow>
        </InspectorFill>
        <PreviewHead>
          <PreviewName>Image<UpDown color="#bbb" /></PreviewName>
          <PreviewStripes />
        </PreviewHead>
        <PreviewBody>
          <span>Image</span>
          <span>Image Size: 0x0</span>
        </PreviewBody>
      </InspectorColumn>
    </Workspace>

    <StatusBar>
      <WarningIcon />
      Assets/Scripts/ReplayCamera.cs(20,13): warning CS0414: The private field `ReplayCamera.CameraReplay.currentFrame' is assigned but its value is never used
    </StatusBar>
  </Window>
);

export default App;
